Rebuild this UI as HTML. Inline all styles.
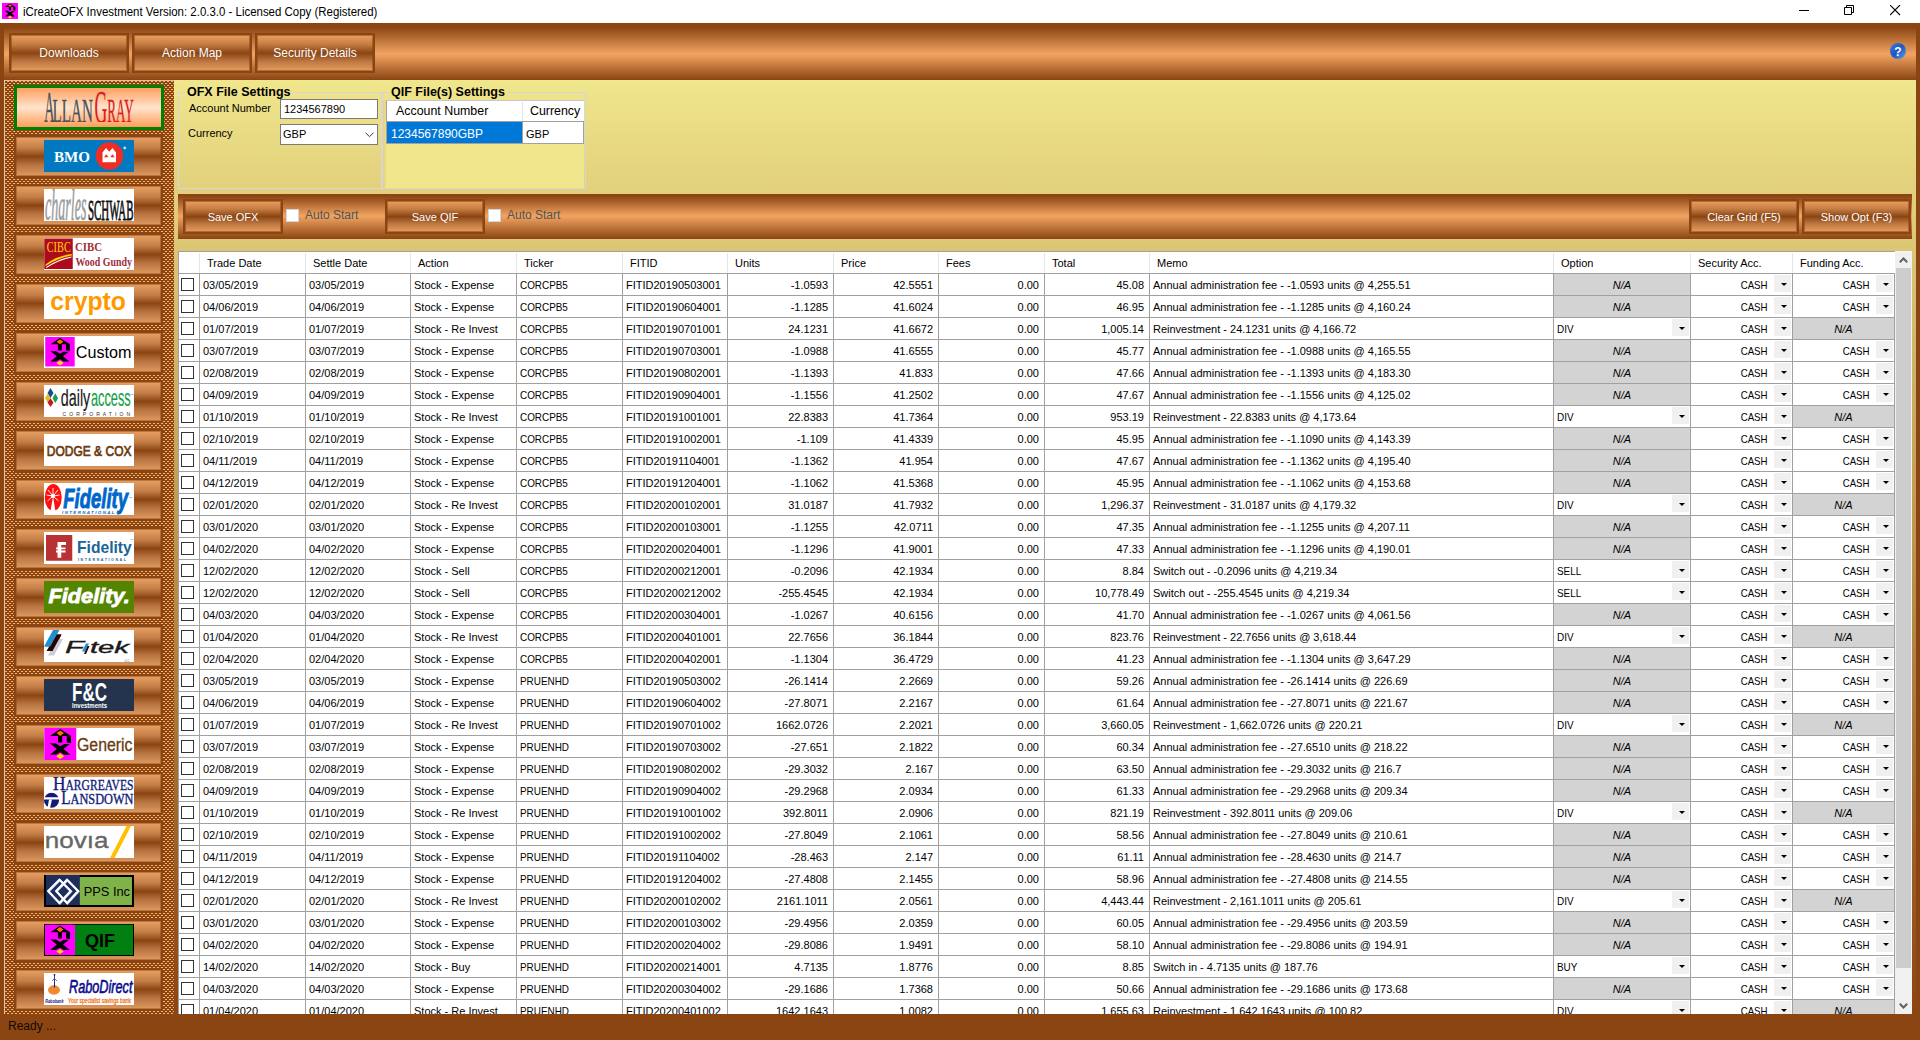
<!DOCTYPE html><html><head><meta charset="utf-8"><title>iCreateOFX</title><style>html,body{margin:0;padding:0;}
body{width:1920px;height:1040px;overflow:hidden;position:relative;background:#8B4513;font-family:"Liberation Sans",sans-serif;}
div,span,svg{box-sizing:border-box;}
#title{position:absolute;left:0;top:0;width:1920px;height:23px;background:#fff;}
.appicon{position:absolute;left:2px;top:3px;}
.ttext{position:absolute;left:23px;top:5px;font-size:12px;transform:scaleX(0.954);transform-origin:0 0;color:#000;white-space:nowrap;}
.wc{position:absolute;top:5px;}
#toolbar{position:absolute;left:4px;top:23px;width:1912px;height:57px;background:linear-gradient(#8B4513 0px,#8B4513 4px,#F2A462 31px,#8B4513 57px);}
.btn{position:absolute;border:2px solid #8B4513;box-shadow:inset 0 0 0 1px rgba(139,69,19,.55);background:linear-gradient(#EBA05E 0%,#C77E45 25%,#8B4513 50%,#C07A44 75%,#E69C5C 100%);color:#fff;font-size:12px;text-align:center;}
.btn span{position:absolute;left:0;right:0;top:50%;transform:translateY(-50%);white-space:nowrap;text-shadow:0 0 1px rgba(80,40,10,.3);}
#help{position:absolute;left:1889px;top:42px;}
#lpanel{position:absolute;left:4px;top:80px;}
.lbtn{position:absolute;left:14px;width:149px;height:43px;border:2px solid #8B4513;box-shadow:inset 0 0 0 1px rgba(139,69,19,.45);background:linear-gradient(#E8A062 0%,#C47E48 28%,#8B4513 50%,#B87442 72%,#DE9A5E 100%);}
.selbtn{position:absolute;border:3px solid #008000;background:linear-gradient(#FFA060 0%,#FFC8A0 30%,#FFE4CC 50%,#FFC8A0 70%,#FF9E5C 100%);}
.logo{position:absolute;left:44px;width:90px;height:32px;overflow:hidden;}
.logo svg{display:block;}
#main{position:absolute;left:174px;top:80px;width:1742px;height:934px;background:linear-gradient(#F0E68C 0px,#E2D07C 110px,#8B4513 934px);}
.gbox{position:absolute;border:1px solid #D6D6DA;}
.gline{position:absolute;height:1px;background:#D6D6DA;}
.gtitle{position:absolute;font-size:12.5px;font-weight:bold;color:#000;padding:0 3px;white-space:nowrap;background:transparent;}
.lbl{position:absolute;font-size:11px;color:#000;white-space:nowrap;}
.tbox{position:absolute;background:#fff;border:1px solid #7A7A7A;}
.tbox span{position:absolute;font-size:11px;color:#000;white-space:nowrap;}
#qif{position:absolute;left:386px;top:100px;width:198px;height:44px;border:1px solid #A0A0A0;background:#fff;}
#qif .qh{position:absolute;top:0;height:21px;background:#fff;}
#qif span{position:absolute;top:3px;font-size:12px;white-space:nowrap;}
#qif .qsel{position:absolute;left:0;top:21px;width:135px;height:21px;background:#0078D7;color:#fff;}
#qif .qsel span{left:3px;top:4px;}
#qif .qc{position:absolute;left:136px;top:21px;width:60px;height:21px;background:#fff;}
#qif .qc span{left:3px;top:4px;}
#stool{position:absolute;left:178px;top:194px;width:1734px;height:45px;background:linear-gradient(#8B4513 0px,#8B4513 2px,#F2A462 22px,#8B4513 45px);}
.sbtn{font-size:11px;}
.cbx{position:absolute;width:13px;height:13px;background:#fff;border:1px solid #CCD6E0;}
.astext{position:absolute;font-size:12px;color:#4E5656;white-space:nowrap;}
#grid{position:absolute;left:178px;top:251px;width:1734px;height:763px;background:#fff;border-top:1px solid #A0A0A0;border-left:1px solid #A0A0A0;overflow:hidden;
 background-image:repeating-linear-gradient(#A0A0A0 0px,#A0A0A0 1px,transparent 1px,transparent 22px);background-position:0 21px;background-size:1716px 100%;background-repeat:no-repeat;}
#grid>div{position:absolute;}
.hd{top:5px;font-size:11px;color:#000;white-space:nowrap;}
.hsep{top:1px;width:1px;height:20px;background:#E5E5E5;}
#vlines{left:0;top:0;width:1716px;height:763px;pointer-events:none;}
.vl{position:absolute;top:22px;width:1px;height:800px;background:#A0A0A0;}
.t{font-size:11px;color:#000;white-space:nowrap;line-height:21px;height:21px;padding-top:1px;}
.t.r{text-align:right;}
.cb{left:2px;width:13px;height:13px;border:1px solid #333;background:#fff;}
.na{height:21px;line-height:21px;padding-top:1px;background:#D3D3D3;font-size:11px;font-style:italic;text-align:center;color:#000;}
.dd{width:17px;height:17px;background:#F0F0F0;}
.dd:after{content:"";position:absolute;left:7px;top:8px;border-left:3px solid transparent;border-right:3px solid transparent;border-top:3px solid #000;}
#sb{left:1716px;top:0;width:17px;height:763px;background:#F0F0F0;}
#thumb{position:absolute;left:1px;top:16px;width:15px;height:700px;background:#CDCDCD;}
#status{position:absolute;left:0;top:1014px;width:1920px;height:26px;background:#8B4513;color:#140A02;font-size:12px;padding:5px 0 0 8px;}
.abs{position:absolute;}
.qt{position:absolute;white-space:nowrap;color:#000;}
.cash{display:inline-block;transform:scaleX(0.88);transform-origin:100% 50%;}
.tick{transform:scaleX(0.9);transform-origin:0 50%;}
</style></head><body>
<div id="title"><svg class="appicon" width="16" height="16" viewBox="0 0 32 32"><rect width="32" height="32" fill="#ff00ff"/><path d="M5.75 7.9L16 1L26.75 8V15.2L22.5 14.6V8H18V14.6H13.75V8Z" fill="#000"/><path d="M12.25 5.1L16 2.4L19.75 5.1L16 7.9Z" fill="#ff7000"/><path d="M5.5 15.25L11.75 15.5L16 18.25L20 16L25.5 16L19.25 21L26.25 26.75L20 26.75L16 24.25L12 26.5L5.75 26.75L12.5 21Z" fill="#000"/><path d="M12 28.25L16 25.6L20 28.25L16 31Z" fill="#ffd800"/></svg><span class="ttext">iCreateOFX Investment Version: 2.0.3.0 - Licensed Copy (Registered)</span>
<svg class="wc" style="left:1799px" width="11" height="11"><rect x="0" y="5" width="10" height="1" fill="#000"/></svg>
<svg class="wc" style="left:1844px" width="11" height="11"><path d="M0.5 2.5h7v7h-7z M2.5 2.5v-2h7v7h-2" fill="none" stroke="#000" stroke-width="1"/></svg>
<svg class="wc" style="left:1890px" width="11" height="11"><path d="M0 0L10 10M10 0L0 10" stroke="#000" stroke-width="1.1"/></svg>
</div>
<div id="toolbar"></div>
<div class="btn" style="left:9px;top:33px;width:120px;height:40px"><span>Downloads</span></div>
<div class="btn" style="left:132px;top:33px;width:120px;height:40px"><span>Action Map</span></div>
<div class="btn" style="left:255px;top:33px;width:120px;height:40px"><span>Security Details</span></div>
<svg id="help" width="18" height="18" viewBox="0 0 18 18"><defs><linearGradient id="hg" x1="0" y1="0" x2="1" y2="1"><stop offset="0" stop-color="#3b7be0"/><stop offset="0.5" stop-color="#1f55c0"/><stop offset="1" stop-color="#5aa8f0"/></linearGradient></defs><circle cx="9" cy="9" r="8" fill="url(#hg)"/><text x="9" y="13.5" text-anchor="middle" font-family="Liberation Sans" font-weight="bold" font-size="12" fill="#fff">?</text></svg>
<svg id="lpanel" width="170" height="934"><defs><pattern id="pt" width="4" height="4" patternUnits="userSpaceOnUse"><rect width="4" height="4" fill="#8B4513"/><rect x="3" y="1" width="1" height="1" fill="#FFB46C"/><rect x="0" y="1" width="1" height="1" fill="#FFB46C"/><rect x="1" y="3" width="2" height="1" fill="#FFB46C"/></pattern></defs><rect width="170" height="934" fill="url(#pt)"/><rect width="1" height="934" fill="#F0DCC8" opacity="0.8"/><rect width="170" height="1" fill="#F0DCC8" opacity="0.8"/></svg>
<div class="selbtn" style="left:14px;top:85px;width:150px;height:45px"></div>
<div class="lbtn" style="top:135px"></div>
<div class="lbtn" style="top:184px"></div>
<div class="lbtn" style="top:233px"></div>
<div class="lbtn" style="top:282px"></div>
<div class="lbtn" style="top:331px"></div>
<div class="lbtn" style="top:380px"></div>
<div class="lbtn" style="top:429px"></div>
<div class="lbtn" style="top:478px"></div>
<div class="lbtn" style="top:527px"></div>
<div class="lbtn" style="top:576px"></div>
<div class="lbtn" style="top:625px"></div>
<div class="lbtn" style="top:674px"></div>
<div class="lbtn" style="top:723px"></div>
<div class="lbtn" style="top:772px"></div>
<div class="lbtn" style="top:821px"></div>
<div class="lbtn" style="top:870px"></div>
<div class="lbtn" style="top:919px"></div>
<div class="lbtn" style="top:968px"></div>
<div class="logo" style="top:90px"><svg width="90" height="32" viewBox="0 0 90 32"><text x="0.2" y="31.9" font-family="Liberation Serif" font-size="45" font-weight="normal" font-style="normal" fill="#4c525a" textLength="10.2" lengthAdjust="spacingAndGlyphs" stroke="#4c525a" stroke-width="0.35">A</text><text x="8.5" y="31.9" font-family="Liberation Serif" font-size="33.5" font-weight="normal" font-style="normal" fill="#4c525a" textLength="40.5" lengthAdjust="spacingAndGlyphs" stroke="#4c525a" stroke-width="0.35">LLAN</text><text x="50.5" y="32.5" font-family="Liberation Serif" font-size="46" font-weight="normal" font-style="normal" fill="#d81e24" textLength="12.7" lengthAdjust="spacingAndGlyphs" stroke="#d81e24" stroke-width="0.35">G</text><text x="63.2" y="31.9" font-family="Liberation Serif" font-size="33.5" font-weight="normal" font-style="normal" fill="#d81e24" textLength="26.5" lengthAdjust="spacingAndGlyphs" stroke="#d81e24" stroke-width="0.35">RAY</text></svg></div>
<div class="logo" style="top:140px"><svg width="90" height="32" viewBox="0 0 90 32"><rect width="90" height="32" fill="#0079c1"/><text x="10" y="22.25" font-family="Liberation Serif" font-size="15" font-weight="bold" font-style="normal" fill="#fff" textLength="36" lengthAdjust="spacingAndGlyphs" >BMO</text><circle cx="65.4" cy="16" r="13.7" fill="#ee2e24"/><path d="M58.5 22.25V12.5L62 8L65.25 11.75L68.5 8L72 12.5V22.25Z" fill="#fff"/><path d="M60 17.25L62.25 14.25L64.5 17.25ZM66.25 17.25L68.5 14.25L70.75 17.25Z" fill="#ee2e24"/><circle cx="80.75" cy="8" r="1.4" fill="#c8dcf0"/></svg></div>
<div class="logo" style="top:189px"><svg width="90" height="32" viewBox="0 0 90 32"><rect width="90" height="32" fill="#fff"/><text x="1" y="30.75" font-family="Liberation Serif" font-size="44" font-weight="normal" font-style="italic" fill="#9a9a9a" textLength="41.5" lengthAdjust="spacingAndGlyphs" stroke="#9a9a9a" stroke-width="0.6">charles</text><text x="44" y="30.75" font-family="Liberation Serif" font-size="29.5" font-weight="normal" font-style="normal" fill="#111" textLength="45.5" lengthAdjust="spacingAndGlyphs" stroke="#111" stroke-width="0.9">SCHWAB</text></svg></div>
<div class="logo" style="top:238px"><svg width="90" height="32" viewBox="0 0 90 32"><rect width="90" height="32" fill="#fff"/><rect x="0.25" y="0.5" width="28.5" height="30.5" fill="#ae0a1e"/><text x="2.75" y="14.25" font-family="Liberation Serif" font-size="15.5" font-weight="normal" font-style="normal" fill="#ffd700" textLength="24" lengthAdjust="spacingAndGlyphs" >CIBC</text><path d="M1.5 26.5 Q12 18 27.75 16 L27.75 17.5 Q14 20 1.5 28Z" fill="#ffd700"/><path d="M2 29 Q14 21 27.5 18.5 L27.5 19.5 Q14 22.5 2.5 30Z" fill="#fff"/><text x="31" y="13" font-family="Liberation Serif" font-size="13.5" font-weight="bold" font-style="normal" fill="#a0303c" textLength="27" lengthAdjust="spacingAndGlyphs" >CIBC</text><text x="31.5" y="27.5" font-family="Liberation Serif" font-size="12.5" font-weight="bold" font-style="normal" fill="#a0303c" textLength="56.5" lengthAdjust="spacingAndGlyphs" >Wood Gundy</text></svg></div>
<div class="logo" style="top:287px"><svg width="90" height="32" viewBox="0 0 90 32"><rect width="90" height="32" fill="#fff"/><text x="6.25" y="23" font-family="Liberation Sans" font-size="26" font-weight="bold" font-style="normal" fill="#ff9900" textLength="75.75" lengthAdjust="spacingAndGlyphs" >crypto</text></svg></div>
<div class="logo" style="top:336px"><svg width="90" height="32" viewBox="0 0 90 32"><rect width="90" height="32" fill="#fff"/><g transform="translate(1.25,1) scale(0.92)"><rect width="32" height="32" fill="#ff00ff"/><path d="M5.75 7.9L16 1L26.75 8V15.2L22.5 14.6V8H18V14.6H13.75V8Z" fill="#000"/><path d="M12.25 5.1L16 2.4L19.75 5.1L16 7.9Z" fill="#ff7000"/><path d="M5.5 15.25L11.75 15.5L16 18.25L20 16L25.5 16L19.25 21L26.25 26.75L20 26.75L16 24.25L12 26.5L5.75 26.75L12.5 21Z" fill="#000"/><path d="M12 28.25L16 25.6L20 28.25L16 31Z" fill="#ffd800"/></g><text x="31.75" y="22" font-family="Liberation Sans" font-size="16.75" font-weight="normal" font-style="normal" fill="#000" textLength="55.75" lengthAdjust="spacingAndGlyphs" >Custom</text></svg></div>
<div class="logo" style="top:385px"><svg width="90" height="32" viewBox="0 0 90 32"><rect width="90" height="32" fill="#fff"/><path d="M3.5 8.0L6.5 3.0L9.5 8.0L6.5 13.0Z" fill="#1b4a8a"/><path d="M0.9000000000000004 13.2L3.7 8.799999999999999L6.5 13.2L3.7 17.6Z" fill="#e3bb22"/><path d="M8.5 13.2L11.3 8.299999999999999L14.100000000000001 13.2L11.3 18.1Z" fill="#19a052"/><path d="M3.5 17.6L6.5 13.200000000000001L9.5 17.6L6.5 22.0Z" fill="#c01a24"/><text x="16.75" y="20.75" font-family="Liberation Sans" font-size="24" font-weight="normal" font-style="normal" fill="#1a1a1a" textLength="29.5" lengthAdjust="spacingAndGlyphs" stroke="#1a1a1a" stroke-width="0.2">daily</text><text x="47" y="20.75" font-family="Liberation Sans" font-size="24" font-weight="normal" font-style="normal" fill="#16a04a" textLength="39.75" lengthAdjust="spacingAndGlyphs" stroke="#16a04a" stroke-width="0.2">access</text><text x="18.5" y="31.25" font-family="Liberation Sans" font-size="5" font-weight="normal" font-style="normal" fill="#333" textLength="67.5" lengthAdjust="spacing" >CORPORATION</text><text x="86.5" y="10" font-family="Liberation Sans" font-size="2.2" font-weight="normal" font-style="normal" fill="#555" >TM</text></svg></div>
<div class="logo" style="top:434px"><svg width="90" height="32" viewBox="0 0 90 32"><rect width="90" height="32" fill="#fff"/><text x="2.75" y="21.75" font-family="Liberation Sans" font-size="14.7" font-weight="normal" font-style="normal" fill="#6b3a10" textLength="84.75" lengthAdjust="spacingAndGlyphs" stroke="#6b3a10" stroke-width="0.7">DODGE &amp; COX</text></svg></div>
<div class="logo" style="top:483px"><svg width="90" height="32" viewBox="0 0 90 32"><rect width="90" height="32" fill="#fff"/><ellipse cx="9.25" cy="14.5" rx="8.5" ry="13.5" fill="#ff1010"/><path d="M6.5 28.5L9 13L11.5 28.5Z" fill="#fff"/><g stroke="#fff" stroke-width="0.9"><path d="M9 13L9 5M9 13L4 7M9 13L14 7M9 13L2.5 12M9 13L15.5 12M9 13L3.5 18M9 13L14.5 18"/></g><circle cx="9" cy="13" r="2" fill="#fff"/><text x="19.25" y="25.25" font-family="Liberation Sans" font-size="28" font-weight="bold" font-style="italic" fill="#0066cc" textLength="64.75" lengthAdjust="spacingAndGlyphs" stroke="#0066cc" stroke-width="1">Fidelity</text><text x="18" y="30.75" font-family="Liberation Sans" font-size="4.4" font-weight="bold" font-style="italic" fill="#0066cc" textLength="52.5" lengthAdjust="spacing" >INTERNATIONAL</text><text x="85" y="15" font-family="Liberation Sans" font-size="2.5" font-weight="normal" font-style="normal" fill="#0066cc" >TM</text></svg></div>
<div class="logo" style="top:532px"><svg width="90" height="32" viewBox="0 0 90 32"><rect width="90" height="32" fill="#fff"/><rect x="2" y="3" width="26.25" height="25.75" fill="#b83234"/><path d="M13.5 10H22V13H17.25V15.5H21.5V17.25H17.25V18.5H21.5V20.5H17.25V25.75H13.5V20.5H12V18.5H13.5V17.25H12V15.5H13.5Z" fill="#fff"/><text x="33" y="21" font-family="Liberation Sans" font-size="17" font-weight="bold" font-style="normal" fill="#1a6496" textLength="54.75" lengthAdjust="spacingAndGlyphs" >Fidelity</text><text x="34" y="28.75" font-family="Liberation Sans" font-size="3.6" font-weight="bold" font-style="normal" fill="#1a6496" textLength="48" lengthAdjust="spacing" >INTERNATIONAL</text><text x="86.5" y="8" font-family="Liberation Sans" font-size="2" font-weight="normal" font-style="normal" fill="#1a6496" >TM</text></svg></div>
<div class="logo" style="top:581px"><svg width="90" height="32" viewBox="0 0 90 32"><rect width="90" height="32" fill="#548500"/><text x="4.5" y="21.75" font-family="Liberation Sans" font-size="20" font-weight="bold" font-style="italic" fill="#fff" textLength="81.25" lengthAdjust="spacingAndGlyphs" stroke="#fff" stroke-width="0.8">Fidelity.</text></svg></div>
<div class="logo" style="top:630px"><svg width="90" height="32" viewBox="0 0 90 32"><rect width="90" height="32" fill="#fff"/><path d="M9.25 0H15.25L6.25 16.5H0.25Z" fill="#1e90d0"/><path d="M12.25 4.5H17.5L8.5 21H2.75Z" fill="#2a0000"/><path d="M13 9H19L10 25.5H4Z" fill="#c8c8d0" opacity="0.9"/><path d="M12.25 4.5H17.5L8.5 21H2.75Z" fill="#2a0000"/><path d="M9.25 0H15.25L6.25 16.5H0.25Z" fill="#1e90d0"/><text x="21" y="23" font-family="Liberation Sans" font-size="17" font-weight="normal" font-style="italic" fill="#1a1a1a" textLength="19" lengthAdjust="spacingAndGlyphs" stroke="#1a1a1a" stroke-width="0.3">F</text><path d="M42 13.5H45L41 21.5H38Z" fill="#1e90d0"/><path d="M43.5 16H45.5L42 24H40Z" fill="#2a0000"/><text x="46" y="23" font-family="Liberation Sans" font-size="17" font-weight="normal" font-style="italic" fill="#1a1a1a" textLength="39" lengthAdjust="spacingAndGlyphs" stroke="#1a1a1a" stroke-width="0.4">tek</text><text x="80.5" y="31.5" font-family="Liberation Sans" font-size="2.6" font-weight="normal" font-style="normal" fill="#555" >LLC</text></svg></div>
<div class="logo" style="top:679px"><svg width="90" height="32" viewBox="0 0 90 32"><rect width="90" height="32" fill="#24344e"/><text x="28" y="22" font-family="Liberation Sans" font-size="26.5" font-weight="bold" font-style="normal" fill="#fff" textLength="35" lengthAdjust="spacingAndGlyphs" >F&amp;C</text><text x="28" y="29" font-family="Liberation Sans" font-size="7" font-weight="bold" font-style="normal" fill="#fff" textLength="35" lengthAdjust="spacingAndGlyphs" >Investments</text></svg></div>
<div class="logo" style="top:728px"><svg width="90" height="32" viewBox="0 0 90 32"><rect width="90" height="32" fill="#fff"/><g transform="translate(0.25,0)"><rect width="32" height="32" fill="#ff00ff"/><path d="M5.75 7.9L16 1L26.75 8V15.2L22.5 14.6V8H18V14.6H13.75V8Z" fill="#000"/><path d="M12.25 5.1L16 2.4L19.75 5.1L16 7.9Z" fill="#ff7000"/><path d="M5.5 15.25L11.75 15.5L16 18.25L20 16L25.5 16L19.25 21L26.25 26.75L20 26.75L16 24.25L12 26.5L5.75 26.75L12.5 21Z" fill="#000"/><path d="M12 28.25L16 25.6L20 28.25L16 31Z" fill="#ffd800"/></g><text x="33" y="22.5" font-family="Liberation Sans" font-size="18.8" font-weight="normal" font-style="normal" fill="#6b3a10" textLength="55.5" lengthAdjust="spacingAndGlyphs" stroke="#6b3a10" stroke-width="0.3">Generic</text></svg></div>
<div class="logo" style="top:777px"><svg width="90" height="32" viewBox="0 0 90 32"><rect width="90" height="32" fill="#fff"/><circle cx="7.5" cy="23.25" r="7.5" fill="#101c78"/><rect x="0" y="20.25" width="15" height="2.25" fill="#fff"/><path d="M5 22.5H8L6 31H3.5Z" fill="#fff"/><text x="9" y="12.75" font-family="Liberation Serif" font-size="19" font-weight="normal" font-style="normal" fill="#101c78" textLength="12.5" lengthAdjust="spacingAndGlyphs" stroke="#101c78" stroke-width="0.35">H</text><text x="21.5" y="12.75" font-family="Liberation Serif" font-size="14.75" font-weight="normal" font-style="normal" fill="#101c78" textLength="68" lengthAdjust="spacingAndGlyphs" stroke="#101c78" stroke-width="0.35">ARGREAVES</text><text x="17.25" y="26.75" font-family="Liberation Serif" font-size="19" font-weight="normal" font-style="normal" fill="#101c78" textLength="9.25" lengthAdjust="spacingAndGlyphs" stroke="#101c78" stroke-width="0.35">L</text><text x="26.5" y="26.75" font-family="Liberation Serif" font-size="13.6" font-weight="normal" font-style="normal" fill="#101c78" textLength="63" lengthAdjust="spacingAndGlyphs" stroke="#101c78" stroke-width="0.35">ANSDOWN</text></svg></div>
<div class="logo" style="top:826px"><svg width="90" height="32" viewBox="0 0 90 32"><rect width="90" height="32" fill="#fff"/><text x="0.75" y="21.5" font-family="Liberation Sans" font-size="22.5" font-weight="normal" font-style="normal" fill="#666" textLength="63.75" lengthAdjust="spacingAndGlyphs" stroke="#666" stroke-width="0.35">nov&#305;a</text><path d="M66 32H70.5L87 0H82.5Z" fill="#ffc000"/></svg></div>
<div class="logo" style="top:875px"><svg width="90" height="32" viewBox="0 0 90 32"><rect width="90" height="32" fill="#000"/><rect x="2" y="0" width="33.75" height="30" fill="#1e2e5c"/><rect x="35.75" y="2" width="52.25" height="28" fill="#80b24a"/><g fill="none" stroke="#b8c8e8" stroke-width="2"><path d="M4.6 16.6L15.9 5.2L27.2 16.6L15.9 28.6Z"/><path d="M12.6 16.6L23.5 5.2L34.6 16.6L23.5 28.6Z"/></g><g fill="none" stroke="#fff" stroke-width="2"><path d="M4.1 16L15.4 4.6L26.7 16L15.4 28Z"/><path d="M12.1 16L23 4.6L34.1 16L23 28Z"/></g><text x="39.75" y="20.75" font-family="Liberation Sans" font-size="13.3" font-weight="normal" font-style="normal" fill="#000" textLength="46.25" lengthAdjust="spacingAndGlyphs" >PPS Inc</text></svg></div>
<div class="logo" style="top:924px"><svg width="90" height="32" viewBox="0 0 90 32"><rect width="90" height="32" fill="#000"/><g transform="translate(1,0.75) scale(0.9375,0.945)"><rect width="32" height="32" fill="#ff00ff"/><path d="M5.75 7.9L16 1L26.75 8V15.2L22.5 14.6V8H18V14.6H13.75V8Z" fill="#000"/><path d="M12.25 5.1L16 2.4L19.75 5.1L16 7.9Z" fill="#ff7000"/><path d="M5.5 15.25L11.75 15.5L16 18.25L20 16L25.5 16L19.25 21L26.25 26.75L20 26.75L16 24.25L12 26.5L5.75 26.75L12.5 21Z" fill="#000"/><path d="M12 28.25L16 25.6L20 28.25L16 31Z" fill="#ffd800"/></g><rect x="31" y="0.75" width="58" height="30.25" fill="#008010"/><text x="41" y="22.75" font-family="Liberation Sans" font-size="19.2" font-weight="bold" font-style="normal" fill="#000" textLength="30" lengthAdjust="spacingAndGlyphs" >QIF</text></svg></div>
<div class="logo" style="top:973px"><svg width="90" height="32" viewBox="0 0 90 32"><rect width="90" height="32" fill="#fff"/><ellipse cx="10" cy="17" rx="6" ry="4.75" fill="#f08a30"/><path d="M10.25 1L11 1.5L11 14.5L10 14.5Z" fill="#101880"/><circle cx="10.5" cy="1.8" r="0.9" fill="#101880"/><path d="M8 8L10.5 5.5L13 8" fill="none" stroke="#101880" stroke-width="0.6"/><text x="25" y="19.5" font-family="Liberation Sans" font-size="17.8" font-weight="normal" font-style="italic" fill="#0a0a8c" textLength="63.5" lengthAdjust="spacingAndGlyphs" stroke="#0a0a8c" stroke-width="0.6">RaboDirect</text><text x="1.25" y="29.75" font-family="Liberation Sans" font-size="5.5" font-weight="bold" font-style="italic" fill="#101880" textLength="18.25" lengthAdjust="spacingAndGlyphs" >Rabobank</text><text x="24" y="30" font-family="Liberation Sans" font-size="6.4" font-weight="normal" font-style="normal" fill="#f07020" textLength="63" lengthAdjust="spacingAndGlyphs" stroke="#f07020" stroke-width="0.25">Your specialist savings bank</text></svg></div>
<div id="main"></div>
<div class="gbox" style="left:178px;top:92px;width:204px;height:97px;border-top:none"></div><div class="gline" style="left:178px;top:92px;width:8px"></div><div class="gline" style="left:290px;top:92px;width:92px"></div>
<div class="gtitle" style="left:184px;top:85px">OFX File Settings</div>
<div class="gbox" style="left:382px;top:92px;width:204px;height:97px;border-top:none"></div><div class="gline" style="left:382px;top:92px;width:8px"></div><div class="gline" style="left:508px;top:92px;width:78px"></div>
<div class="gtitle" style="left:388px;top:85px">QIF File(s) Settings</div>
<div class="lbl" style="left:189px;top:102px">Account Number</div>
<div class="lbl" style="left:188px;top:127px">Currency</div>
<div class="tbox" style="left:280px;top:99px;width:98px;height:20px"><span style="left:3px;top:3px">1234567890</span></div>
<div class="tbox" style="left:280px;top:124px;width:98px;height:21px"><span style="left:2px;top:3px">GBP</span><svg style="position:absolute;left:84px;top:7px" width="10" height="6"><path d="M0.5 0.8L4.5 4.6L8.5 0.8" fill="none" stroke="#333" stroke-width="1"/></svg></div>
<div class="abs" style="left:383px;top:100px;width:3px;height:88px;background:linear-gradient(90deg,#E4D27E,#EBDD86)"></div>
<div class="abs" style="left:386px;top:100px;width:198px;height:88px;background:#F0E68C"></div>
<div class="abs" style="left:386px;top:100px;width:198px;height:22px;background:#fff;border-left:1px solid #A0A0A0;border-top:1px solid #C8C8C8"></div>
<div class="abs" style="left:522px;top:102px;width:1px;height:19px;background:#E3E3E3"></div>
<div class="abs" style="left:386px;top:121px;width:198px;height:1px;background:#A0A0A0"></div>
<div class="abs" style="left:386px;top:122px;width:1px;height:21px;background:#A0A0A0"></div>
<div class="abs" style="left:387px;top:122px;width:135px;height:21px;background:#0078D7"></div>
<div class="abs" style="left:522px;top:122px;width:1px;height:21px;background:#A0A0A0"></div>
<div class="abs" style="left:523px;top:122px;width:60px;height:21px;background:#fff"></div>
<div class="abs" style="left:583px;top:122px;width:1px;height:21px;background:#A0A0A0"></div>
<div class="abs" style="left:386px;top:143px;width:198px;height:1px;background:#A0A0A0"></div>
<div class="qt" style="left:396px;top:104px;font-size:12.4px">Account Number</div>
<div class="qt" style="left:530px;top:104px;font-size:12.4px">Currency</div>
<div class="qt" style="left:391px;top:127px;font-size:12px;color:#fff">1234567890GBP</div>
<div class="qt" style="left:526px;top:128px;font-size:11px">GBP</div>
<div id="stool"></div>
<div class="btn sbtn" style="left:183px;top:199px;width:100px;height:35px"><span>Save OFX</span></div>
<div class="btn sbtn" style="left:385px;top:199px;width:100px;height:35px"><span>Save QIF</span></div>
<div class="btn sbtn" style="left:1689px;top:199px;width:110px;height:35px"><span>Clear Grid (F5)</span></div>
<div class="btn sbtn" style="left:1802px;top:199px;width:109px;height:35px"><span>Show Opt (F3)</span></div>
<div class="cbx" style="left:286px;top:209px"></div><div class="astext" style="left:305px;top:208px">Auto Start</div>
<div class="cbx" style="left:488px;top:209px"></div><div class="astext" style="left:507px;top:208px">Auto Start</div>
<div id="grid">
<div class="hd" style="left:28px">Trade Date</div><div class="hd" style="left:134px">Settle Date</div><div class="hd" style="left:239px">Action</div><div class="hd" style="left:345px">Ticker</div><div class="hd" style="left:451px">FITID</div><div class="hd" style="left:556px">Units</div><div class="hd" style="left:662px">Price</div><div class="hd" style="left:767px">Fees</div><div class="hd" style="left:873px">Total</div><div class="hd" style="left:978px">Memo</div><div class="hd" style="left:1382px">Option</div><div class="hd" style="left:1519px">Security Acc.</div><div class="hd" style="left:1621px">Funding Acc.</div><div class="hsep" style="left:20px"></div><div class="hsep" style="left:126px"></div><div class="hsep" style="left:231px"></div><div class="hsep" style="left:337px"></div><div class="hsep" style="left:443px"></div><div class="hsep" style="left:548px"></div><div class="hsep" style="left:654px"></div><div class="hsep" style="left:759px"></div><div class="hsep" style="left:865px"></div><div class="hsep" style="left:970px"></div><div class="hsep" style="left:1374px"></div><div class="hsep" style="left:1511px"></div><div class="hsep" style="left:1613px"></div><div class="cb" style="top:26px"></div><div class="t" style="left:24px;top:22px">03/05/2019</div><div class="t" style="left:130px;top:22px">03/05/2019</div><div class="t" style="left:235px;top:22px">Stock - Expense</div><div class="t tick" style="left:341px;top:22px">CORCPB5</div><div class="t" style="left:447px;top:22px">FITID20190503001</div><div class="t r" style="left:549px;width:100px;top:22px">-1.0593</div><div class="t r" style="left:655px;width:99px;top:22px">42.5551</div><div class="t r" style="left:760px;width:100px;top:22px">0.00</div><div class="t r" style="left:866px;width:99px;top:22px">45.08</div><div class="t" style="left:974px;top:22px">Annual administration fee - -1.0593 units @ 4,255.51</div><div class="na" style="left:1375px;width:136px;top:22px">N/A</div><div class="t r" style="left:1512px;width:77px;top:22px"><span class="cash">CASH</span></div><div class="dd" style="left:1595px;top:23px"></div><div class="t r" style="left:1614px;width:77px;top:22px"><span class="cash">CASH</span></div><div class="dd" style="left:1697px;top:23px"></div><div class="cb" style="top:48px"></div><div class="t" style="left:24px;top:44px">04/06/2019</div><div class="t" style="left:130px;top:44px">04/06/2019</div><div class="t" style="left:235px;top:44px">Stock - Expense</div><div class="t tick" style="left:341px;top:44px">CORCPB5</div><div class="t" style="left:447px;top:44px">FITID20190604001</div><div class="t r" style="left:549px;width:100px;top:44px">-1.1285</div><div class="t r" style="left:655px;width:99px;top:44px">41.6024</div><div class="t r" style="left:760px;width:100px;top:44px">0.00</div><div class="t r" style="left:866px;width:99px;top:44px">46.95</div><div class="t" style="left:974px;top:44px">Annual administration fee - -1.1285 units @ 4,160.24</div><div class="na" style="left:1375px;width:136px;top:44px">N/A</div><div class="t r" style="left:1512px;width:77px;top:44px"><span class="cash">CASH</span></div><div class="dd" style="left:1595px;top:45px"></div><div class="t r" style="left:1614px;width:77px;top:44px"><span class="cash">CASH</span></div><div class="dd" style="left:1697px;top:45px"></div><div class="cb" style="top:70px"></div><div class="t" style="left:24px;top:66px">01/07/2019</div><div class="t" style="left:130px;top:66px">01/07/2019</div><div class="t" style="left:235px;top:66px">Stock - Re Invest</div><div class="t tick" style="left:341px;top:66px">CORCPB5</div><div class="t" style="left:447px;top:66px">FITID20190701001</div><div class="t r" style="left:549px;width:100px;top:66px">24.1231</div><div class="t r" style="left:655px;width:99px;top:66px">41.6672</div><div class="t r" style="left:760px;width:100px;top:66px">0.00</div><div class="t r" style="left:866px;width:99px;top:66px">1,005.14</div><div class="t" style="left:974px;top:66px">Reinvestment - 24.1231 units @ 4,166.72</div><div class="t tick" style="left:1378px;top:66px">DIV</div><div class="dd" style="left:1493px;top:67px"></div><div class="t r" style="left:1512px;width:77px;top:66px"><span class="cash">CASH</span></div><div class="dd" style="left:1595px;top:67px"></div><div class="na" style="left:1614px;width:101px;top:66px">N/A</div><div class="cb" style="top:92px"></div><div class="t" style="left:24px;top:88px">03/07/2019</div><div class="t" style="left:130px;top:88px">03/07/2019</div><div class="t" style="left:235px;top:88px">Stock - Expense</div><div class="t tick" style="left:341px;top:88px">CORCPB5</div><div class="t" style="left:447px;top:88px">FITID20190703001</div><div class="t r" style="left:549px;width:100px;top:88px">-1.0988</div><div class="t r" style="left:655px;width:99px;top:88px">41.6555</div><div class="t r" style="left:760px;width:100px;top:88px">0.00</div><div class="t r" style="left:866px;width:99px;top:88px">45.77</div><div class="t" style="left:974px;top:88px">Annual administration fee - -1.0988 units @ 4,165.55</div><div class="na" style="left:1375px;width:136px;top:88px">N/A</div><div class="t r" style="left:1512px;width:77px;top:88px"><span class="cash">CASH</span></div><div class="dd" style="left:1595px;top:89px"></div><div class="t r" style="left:1614px;width:77px;top:88px"><span class="cash">CASH</span></div><div class="dd" style="left:1697px;top:89px"></div><div class="cb" style="top:114px"></div><div class="t" style="left:24px;top:110px">02/08/2019</div><div class="t" style="left:130px;top:110px">02/08/2019</div><div class="t" style="left:235px;top:110px">Stock - Expense</div><div class="t tick" style="left:341px;top:110px">CORCPB5</div><div class="t" style="left:447px;top:110px">FITID20190802001</div><div class="t r" style="left:549px;width:100px;top:110px">-1.1393</div><div class="t r" style="left:655px;width:99px;top:110px">41.833</div><div class="t r" style="left:760px;width:100px;top:110px">0.00</div><div class="t r" style="left:866px;width:99px;top:110px">47.66</div><div class="t" style="left:974px;top:110px">Annual administration fee - -1.1393 units @ 4,183.30</div><div class="na" style="left:1375px;width:136px;top:110px">N/A</div><div class="t r" style="left:1512px;width:77px;top:110px"><span class="cash">CASH</span></div><div class="dd" style="left:1595px;top:111px"></div><div class="t r" style="left:1614px;width:77px;top:110px"><span class="cash">CASH</span></div><div class="dd" style="left:1697px;top:111px"></div><div class="cb" style="top:136px"></div><div class="t" style="left:24px;top:132px">04/09/2019</div><div class="t" style="left:130px;top:132px">04/09/2019</div><div class="t" style="left:235px;top:132px">Stock - Expense</div><div class="t tick" style="left:341px;top:132px">CORCPB5</div><div class="t" style="left:447px;top:132px">FITID20190904001</div><div class="t r" style="left:549px;width:100px;top:132px">-1.1556</div><div class="t r" style="left:655px;width:99px;top:132px">41.2502</div><div class="t r" style="left:760px;width:100px;top:132px">0.00</div><div class="t r" style="left:866px;width:99px;top:132px">47.67</div><div class="t" style="left:974px;top:132px">Annual administration fee - -1.1556 units @ 4,125.02</div><div class="na" style="left:1375px;width:136px;top:132px">N/A</div><div class="t r" style="left:1512px;width:77px;top:132px"><span class="cash">CASH</span></div><div class="dd" style="left:1595px;top:133px"></div><div class="t r" style="left:1614px;width:77px;top:132px"><span class="cash">CASH</span></div><div class="dd" style="left:1697px;top:133px"></div><div class="cb" style="top:158px"></div><div class="t" style="left:24px;top:154px">01/10/2019</div><div class="t" style="left:130px;top:154px">01/10/2019</div><div class="t" style="left:235px;top:154px">Stock - Re Invest</div><div class="t tick" style="left:341px;top:154px">CORCPB5</div><div class="t" style="left:447px;top:154px">FITID20191001001</div><div class="t r" style="left:549px;width:100px;top:154px">22.8383</div><div class="t r" style="left:655px;width:99px;top:154px">41.7364</div><div class="t r" style="left:760px;width:100px;top:154px">0.00</div><div class="t r" style="left:866px;width:99px;top:154px">953.19</div><div class="t" style="left:974px;top:154px">Reinvestment - 22.8383 units @ 4,173.64</div><div class="t tick" style="left:1378px;top:154px">DIV</div><div class="dd" style="left:1493px;top:155px"></div><div class="t r" style="left:1512px;width:77px;top:154px"><span class="cash">CASH</span></div><div class="dd" style="left:1595px;top:155px"></div><div class="na" style="left:1614px;width:101px;top:154px">N/A</div><div class="cb" style="top:180px"></div><div class="t" style="left:24px;top:176px">02/10/2019</div><div class="t" style="left:130px;top:176px">02/10/2019</div><div class="t" style="left:235px;top:176px">Stock - Expense</div><div class="t tick" style="left:341px;top:176px">CORCPB5</div><div class="t" style="left:447px;top:176px">FITID20191002001</div><div class="t r" style="left:549px;width:100px;top:176px">-1.109</div><div class="t r" style="left:655px;width:99px;top:176px">41.4339</div><div class="t r" style="left:760px;width:100px;top:176px">0.00</div><div class="t r" style="left:866px;width:99px;top:176px">45.95</div><div class="t" style="left:974px;top:176px">Annual administration fee - -1.1090 units @ 4,143.39</div><div class="na" style="left:1375px;width:136px;top:176px">N/A</div><div class="t r" style="left:1512px;width:77px;top:176px"><span class="cash">CASH</span></div><div class="dd" style="left:1595px;top:177px"></div><div class="t r" style="left:1614px;width:77px;top:176px"><span class="cash">CASH</span></div><div class="dd" style="left:1697px;top:177px"></div><div class="cb" style="top:202px"></div><div class="t" style="left:24px;top:198px">04/11/2019</div><div class="t" style="left:130px;top:198px">04/11/2019</div><div class="t" style="left:235px;top:198px">Stock - Expense</div><div class="t tick" style="left:341px;top:198px">CORCPB5</div><div class="t" style="left:447px;top:198px">FITID20191104001</div><div class="t r" style="left:549px;width:100px;top:198px">-1.1362</div><div class="t r" style="left:655px;width:99px;top:198px">41.954</div><div class="t r" style="left:760px;width:100px;top:198px">0.00</div><div class="t r" style="left:866px;width:99px;top:198px">47.67</div><div class="t" style="left:974px;top:198px">Annual administration fee - -1.1362 units @ 4,195.40</div><div class="na" style="left:1375px;width:136px;top:198px">N/A</div><div class="t r" style="left:1512px;width:77px;top:198px"><span class="cash">CASH</span></div><div class="dd" style="left:1595px;top:199px"></div><div class="t r" style="left:1614px;width:77px;top:198px"><span class="cash">CASH</span></div><div class="dd" style="left:1697px;top:199px"></div><div class="cb" style="top:224px"></div><div class="t" style="left:24px;top:220px">04/12/2019</div><div class="t" style="left:130px;top:220px">04/12/2019</div><div class="t" style="left:235px;top:220px">Stock - Expense</div><div class="t tick" style="left:341px;top:220px">CORCPB5</div><div class="t" style="left:447px;top:220px">FITID20191204001</div><div class="t r" style="left:549px;width:100px;top:220px">-1.1062</div><div class="t r" style="left:655px;width:99px;top:220px">41.5368</div><div class="t r" style="left:760px;width:100px;top:220px">0.00</div><div class="t r" style="left:866px;width:99px;top:220px">45.95</div><div class="t" style="left:974px;top:220px">Annual administration fee - -1.1062 units @ 4,153.68</div><div class="na" style="left:1375px;width:136px;top:220px">N/A</div><div class="t r" style="left:1512px;width:77px;top:220px"><span class="cash">CASH</span></div><div class="dd" style="left:1595px;top:221px"></div><div class="t r" style="left:1614px;width:77px;top:220px"><span class="cash">CASH</span></div><div class="dd" style="left:1697px;top:221px"></div><div class="cb" style="top:246px"></div><div class="t" style="left:24px;top:242px">02/01/2020</div><div class="t" style="left:130px;top:242px">02/01/2020</div><div class="t" style="left:235px;top:242px">Stock - Re Invest</div><div class="t tick" style="left:341px;top:242px">CORCPB5</div><div class="t" style="left:447px;top:242px">FITID20200102001</div><div class="t r" style="left:549px;width:100px;top:242px">31.0187</div><div class="t r" style="left:655px;width:99px;top:242px">41.7932</div><div class="t r" style="left:760px;width:100px;top:242px">0.00</div><div class="t r" style="left:866px;width:99px;top:242px">1,296.37</div><div class="t" style="left:974px;top:242px">Reinvestment - 31.0187 units @ 4,179.32</div><div class="t tick" style="left:1378px;top:242px">DIV</div><div class="dd" style="left:1493px;top:243px"></div><div class="t r" style="left:1512px;width:77px;top:242px"><span class="cash">CASH</span></div><div class="dd" style="left:1595px;top:243px"></div><div class="na" style="left:1614px;width:101px;top:242px">N/A</div><div class="cb" style="top:268px"></div><div class="t" style="left:24px;top:264px">03/01/2020</div><div class="t" style="left:130px;top:264px">03/01/2020</div><div class="t" style="left:235px;top:264px">Stock - Expense</div><div class="t tick" style="left:341px;top:264px">CORCPB5</div><div class="t" style="left:447px;top:264px">FITID20200103001</div><div class="t r" style="left:549px;width:100px;top:264px">-1.1255</div><div class="t r" style="left:655px;width:99px;top:264px">42.0711</div><div class="t r" style="left:760px;width:100px;top:264px">0.00</div><div class="t r" style="left:866px;width:99px;top:264px">47.35</div><div class="t" style="left:974px;top:264px">Annual administration fee - -1.1255 units @ 4,207.11</div><div class="na" style="left:1375px;width:136px;top:264px">N/A</div><div class="t r" style="left:1512px;width:77px;top:264px"><span class="cash">CASH</span></div><div class="dd" style="left:1595px;top:265px"></div><div class="t r" style="left:1614px;width:77px;top:264px"><span class="cash">CASH</span></div><div class="dd" style="left:1697px;top:265px"></div><div class="cb" style="top:290px"></div><div class="t" style="left:24px;top:286px">04/02/2020</div><div class="t" style="left:130px;top:286px">04/02/2020</div><div class="t" style="left:235px;top:286px">Stock - Expense</div><div class="t tick" style="left:341px;top:286px">CORCPB5</div><div class="t" style="left:447px;top:286px">FITID20200204001</div><div class="t r" style="left:549px;width:100px;top:286px">-1.1296</div><div class="t r" style="left:655px;width:99px;top:286px">41.9001</div><div class="t r" style="left:760px;width:100px;top:286px">0.00</div><div class="t r" style="left:866px;width:99px;top:286px">47.33</div><div class="t" style="left:974px;top:286px">Annual administration fee - -1.1296 units @ 4,190.01</div><div class="na" style="left:1375px;width:136px;top:286px">N/A</div><div class="t r" style="left:1512px;width:77px;top:286px"><span class="cash">CASH</span></div><div class="dd" style="left:1595px;top:287px"></div><div class="t r" style="left:1614px;width:77px;top:286px"><span class="cash">CASH</span></div><div class="dd" style="left:1697px;top:287px"></div><div class="cb" style="top:312px"></div><div class="t" style="left:24px;top:308px">12/02/2020</div><div class="t" style="left:130px;top:308px">12/02/2020</div><div class="t" style="left:235px;top:308px">Stock - Sell</div><div class="t tick" style="left:341px;top:308px">CORCPB5</div><div class="t" style="left:447px;top:308px">FITID20200212001</div><div class="t r" style="left:549px;width:100px;top:308px">-0.2096</div><div class="t r" style="left:655px;width:99px;top:308px">42.1934</div><div class="t r" style="left:760px;width:100px;top:308px">0.00</div><div class="t r" style="left:866px;width:99px;top:308px">8.84</div><div class="t" style="left:974px;top:308px">Switch out - -0.2096 units @ 4,219.34</div><div class="t tick" style="left:1378px;top:308px">SELL</div><div class="dd" style="left:1493px;top:309px"></div><div class="t r" style="left:1512px;width:77px;top:308px"><span class="cash">CASH</span></div><div class="dd" style="left:1595px;top:309px"></div><div class="t r" style="left:1614px;width:77px;top:308px"><span class="cash">CASH</span></div><div class="dd" style="left:1697px;top:309px"></div><div class="cb" style="top:334px"></div><div class="t" style="left:24px;top:330px">12/02/2020</div><div class="t" style="left:130px;top:330px">12/02/2020</div><div class="t" style="left:235px;top:330px">Stock - Sell</div><div class="t tick" style="left:341px;top:330px">CORCPB5</div><div class="t" style="left:447px;top:330px">FITID20200212002</div><div class="t r" style="left:549px;width:100px;top:330px">-255.4545</div><div class="t r" style="left:655px;width:99px;top:330px">42.1934</div><div class="t r" style="left:760px;width:100px;top:330px">0.00</div><div class="t r" style="left:866px;width:99px;top:330px">10,778.49</div><div class="t" style="left:974px;top:330px">Switch out - -255.4545 units @ 4,219.34</div><div class="t tick" style="left:1378px;top:330px">SELL</div><div class="dd" style="left:1493px;top:331px"></div><div class="t r" style="left:1512px;width:77px;top:330px"><span class="cash">CASH</span></div><div class="dd" style="left:1595px;top:331px"></div><div class="t r" style="left:1614px;width:77px;top:330px"><span class="cash">CASH</span></div><div class="dd" style="left:1697px;top:331px"></div><div class="cb" style="top:356px"></div><div class="t" style="left:24px;top:352px">04/03/2020</div><div class="t" style="left:130px;top:352px">04/03/2020</div><div class="t" style="left:235px;top:352px">Stock - Expense</div><div class="t tick" style="left:341px;top:352px">CORCPB5</div><div class="t" style="left:447px;top:352px">FITID20200304001</div><div class="t r" style="left:549px;width:100px;top:352px">-1.0267</div><div class="t r" style="left:655px;width:99px;top:352px">40.6156</div><div class="t r" style="left:760px;width:100px;top:352px">0.00</div><div class="t r" style="left:866px;width:99px;top:352px">41.70</div><div class="t" style="left:974px;top:352px">Annual administration fee - -1.0267 units @ 4,061.56</div><div class="na" style="left:1375px;width:136px;top:352px">N/A</div><div class="t r" style="left:1512px;width:77px;top:352px"><span class="cash">CASH</span></div><div class="dd" style="left:1595px;top:353px"></div><div class="t r" style="left:1614px;width:77px;top:352px"><span class="cash">CASH</span></div><div class="dd" style="left:1697px;top:353px"></div><div class="cb" style="top:378px"></div><div class="t" style="left:24px;top:374px">01/04/2020</div><div class="t" style="left:130px;top:374px">01/04/2020</div><div class="t" style="left:235px;top:374px">Stock - Re Invest</div><div class="t tick" style="left:341px;top:374px">CORCPB5</div><div class="t" style="left:447px;top:374px">FITID20200401001</div><div class="t r" style="left:549px;width:100px;top:374px">22.7656</div><div class="t r" style="left:655px;width:99px;top:374px">36.1844</div><div class="t r" style="left:760px;width:100px;top:374px">0.00</div><div class="t r" style="left:866px;width:99px;top:374px">823.76</div><div class="t" style="left:974px;top:374px">Reinvestment - 22.7656 units @ 3,618.44</div><div class="t tick" style="left:1378px;top:374px">DIV</div><div class="dd" style="left:1493px;top:375px"></div><div class="t r" style="left:1512px;width:77px;top:374px"><span class="cash">CASH</span></div><div class="dd" style="left:1595px;top:375px"></div><div class="na" style="left:1614px;width:101px;top:374px">N/A</div><div class="cb" style="top:400px"></div><div class="t" style="left:24px;top:396px">02/04/2020</div><div class="t" style="left:130px;top:396px">02/04/2020</div><div class="t" style="left:235px;top:396px">Stock - Expense</div><div class="t tick" style="left:341px;top:396px">CORCPB5</div><div class="t" style="left:447px;top:396px">FITID20200402001</div><div class="t r" style="left:549px;width:100px;top:396px">-1.1304</div><div class="t r" style="left:655px;width:99px;top:396px">36.4729</div><div class="t r" style="left:760px;width:100px;top:396px">0.00</div><div class="t r" style="left:866px;width:99px;top:396px">41.23</div><div class="t" style="left:974px;top:396px">Annual administration fee - -1.1304 units @ 3,647.29</div><div class="na" style="left:1375px;width:136px;top:396px">N/A</div><div class="t r" style="left:1512px;width:77px;top:396px"><span class="cash">CASH</span></div><div class="dd" style="left:1595px;top:397px"></div><div class="t r" style="left:1614px;width:77px;top:396px"><span class="cash">CASH</span></div><div class="dd" style="left:1697px;top:397px"></div><div class="cb" style="top:422px"></div><div class="t" style="left:24px;top:418px">03/05/2019</div><div class="t" style="left:130px;top:418px">03/05/2019</div><div class="t" style="left:235px;top:418px">Stock - Expense</div><div class="t tick" style="left:341px;top:418px">PRUENHD</div><div class="t" style="left:447px;top:418px">FITID20190503002</div><div class="t r" style="left:549px;width:100px;top:418px">-26.1414</div><div class="t r" style="left:655px;width:99px;top:418px">2.2669</div><div class="t r" style="left:760px;width:100px;top:418px">0.00</div><div class="t r" style="left:866px;width:99px;top:418px">59.26</div><div class="t" style="left:974px;top:418px">Annual administration fee - -26.1414 units @ 226.69</div><div class="na" style="left:1375px;width:136px;top:418px">N/A</div><div class="t r" style="left:1512px;width:77px;top:418px"><span class="cash">CASH</span></div><div class="dd" style="left:1595px;top:419px"></div><div class="t r" style="left:1614px;width:77px;top:418px"><span class="cash">CASH</span></div><div class="dd" style="left:1697px;top:419px"></div><div class="cb" style="top:444px"></div><div class="t" style="left:24px;top:440px">04/06/2019</div><div class="t" style="left:130px;top:440px">04/06/2019</div><div class="t" style="left:235px;top:440px">Stock - Expense</div><div class="t tick" style="left:341px;top:440px">PRUENHD</div><div class="t" style="left:447px;top:440px">FITID20190604002</div><div class="t r" style="left:549px;width:100px;top:440px">-27.8071</div><div class="t r" style="left:655px;width:99px;top:440px">2.2167</div><div class="t r" style="left:760px;width:100px;top:440px">0.00</div><div class="t r" style="left:866px;width:99px;top:440px">61.64</div><div class="t" style="left:974px;top:440px">Annual administration fee - -27.8071 units @ 221.67</div><div class="na" style="left:1375px;width:136px;top:440px">N/A</div><div class="t r" style="left:1512px;width:77px;top:440px"><span class="cash">CASH</span></div><div class="dd" style="left:1595px;top:441px"></div><div class="t r" style="left:1614px;width:77px;top:440px"><span class="cash">CASH</span></div><div class="dd" style="left:1697px;top:441px"></div><div class="cb" style="top:466px"></div><div class="t" style="left:24px;top:462px">01/07/2019</div><div class="t" style="left:130px;top:462px">01/07/2019</div><div class="t" style="left:235px;top:462px">Stock - Re Invest</div><div class="t tick" style="left:341px;top:462px">PRUENHD</div><div class="t" style="left:447px;top:462px">FITID20190701002</div><div class="t r" style="left:549px;width:100px;top:462px">1662.0726</div><div class="t r" style="left:655px;width:99px;top:462px">2.2021</div><div class="t r" style="left:760px;width:100px;top:462px">0.00</div><div class="t r" style="left:866px;width:99px;top:462px">3,660.05</div><div class="t" style="left:974px;top:462px">Reinvestment - 1,662.0726 units @ 220.21</div><div class="t tick" style="left:1378px;top:462px">DIV</div><div class="dd" style="left:1493px;top:463px"></div><div class="t r" style="left:1512px;width:77px;top:462px"><span class="cash">CASH</span></div><div class="dd" style="left:1595px;top:463px"></div><div class="na" style="left:1614px;width:101px;top:462px">N/A</div><div class="cb" style="top:488px"></div><div class="t" style="left:24px;top:484px">03/07/2019</div><div class="t" style="left:130px;top:484px">03/07/2019</div><div class="t" style="left:235px;top:484px">Stock - Expense</div><div class="t tick" style="left:341px;top:484px">PRUENHD</div><div class="t" style="left:447px;top:484px">FITID20190703002</div><div class="t r" style="left:549px;width:100px;top:484px">-27.651</div><div class="t r" style="left:655px;width:99px;top:484px">2.1822</div><div class="t r" style="left:760px;width:100px;top:484px">0.00</div><div class="t r" style="left:866px;width:99px;top:484px">60.34</div><div class="t" style="left:974px;top:484px">Annual administration fee - -27.6510 units @ 218.22</div><div class="na" style="left:1375px;width:136px;top:484px">N/A</div><div class="t r" style="left:1512px;width:77px;top:484px"><span class="cash">CASH</span></div><div class="dd" style="left:1595px;top:485px"></div><div class="t r" style="left:1614px;width:77px;top:484px"><span class="cash">CASH</span></div><div class="dd" style="left:1697px;top:485px"></div><div class="cb" style="top:510px"></div><div class="t" style="left:24px;top:506px">02/08/2019</div><div class="t" style="left:130px;top:506px">02/08/2019</div><div class="t" style="left:235px;top:506px">Stock - Expense</div><div class="t tick" style="left:341px;top:506px">PRUENHD</div><div class="t" style="left:447px;top:506px">FITID20190802002</div><div class="t r" style="left:549px;width:100px;top:506px">-29.3032</div><div class="t r" style="left:655px;width:99px;top:506px">2.167</div><div class="t r" style="left:760px;width:100px;top:506px">0.00</div><div class="t r" style="left:866px;width:99px;top:506px">63.50</div><div class="t" style="left:974px;top:506px">Annual administration fee - -29.3032 units @ 216.7</div><div class="na" style="left:1375px;width:136px;top:506px">N/A</div><div class="t r" style="left:1512px;width:77px;top:506px"><span class="cash">CASH</span></div><div class="dd" style="left:1595px;top:507px"></div><div class="t r" style="left:1614px;width:77px;top:506px"><span class="cash">CASH</span></div><div class="dd" style="left:1697px;top:507px"></div><div class="cb" style="top:532px"></div><div class="t" style="left:24px;top:528px">04/09/2019</div><div class="t" style="left:130px;top:528px">04/09/2019</div><div class="t" style="left:235px;top:528px">Stock - Expense</div><div class="t tick" style="left:341px;top:528px">PRUENHD</div><div class="t" style="left:447px;top:528px">FITID20190904002</div><div class="t r" style="left:549px;width:100px;top:528px">-29.2968</div><div class="t r" style="left:655px;width:99px;top:528px">2.0934</div><div class="t r" style="left:760px;width:100px;top:528px">0.00</div><div class="t r" style="left:866px;width:99px;top:528px">61.33</div><div class="t" style="left:974px;top:528px">Annual administration fee - -29.2968 units @ 209.34</div><div class="na" style="left:1375px;width:136px;top:528px">N/A</div><div class="t r" style="left:1512px;width:77px;top:528px"><span class="cash">CASH</span></div><div class="dd" style="left:1595px;top:529px"></div><div class="t r" style="left:1614px;width:77px;top:528px"><span class="cash">CASH</span></div><div class="dd" style="left:1697px;top:529px"></div><div class="cb" style="top:554px"></div><div class="t" style="left:24px;top:550px">01/10/2019</div><div class="t" style="left:130px;top:550px">01/10/2019</div><div class="t" style="left:235px;top:550px">Stock - Re Invest</div><div class="t tick" style="left:341px;top:550px">PRUENHD</div><div class="t" style="left:447px;top:550px">FITID20191001002</div><div class="t r" style="left:549px;width:100px;top:550px">392.8011</div><div class="t r" style="left:655px;width:99px;top:550px">2.0906</div><div class="t r" style="left:760px;width:100px;top:550px">0.00</div><div class="t r" style="left:866px;width:99px;top:550px">821.19</div><div class="t" style="left:974px;top:550px">Reinvestment - 392.8011 units @ 209.06</div><div class="t tick" style="left:1378px;top:550px">DIV</div><div class="dd" style="left:1493px;top:551px"></div><div class="t r" style="left:1512px;width:77px;top:550px"><span class="cash">CASH</span></div><div class="dd" style="left:1595px;top:551px"></div><div class="na" style="left:1614px;width:101px;top:550px">N/A</div><div class="cb" style="top:576px"></div><div class="t" style="left:24px;top:572px">02/10/2019</div><div class="t" style="left:130px;top:572px">02/10/2019</div><div class="t" style="left:235px;top:572px">Stock - Expense</div><div class="t tick" style="left:341px;top:572px">PRUENHD</div><div class="t" style="left:447px;top:572px">FITID20191002002</div><div class="t r" style="left:549px;width:100px;top:572px">-27.8049</div><div class="t r" style="left:655px;width:99px;top:572px">2.1061</div><div class="t r" style="left:760px;width:100px;top:572px">0.00</div><div class="t r" style="left:866px;width:99px;top:572px">58.56</div><div class="t" style="left:974px;top:572px">Annual administration fee - -27.8049 units @ 210.61</div><div class="na" style="left:1375px;width:136px;top:572px">N/A</div><div class="t r" style="left:1512px;width:77px;top:572px"><span class="cash">CASH</span></div><div class="dd" style="left:1595px;top:573px"></div><div class="t r" style="left:1614px;width:77px;top:572px"><span class="cash">CASH</span></div><div class="dd" style="left:1697px;top:573px"></div><div class="cb" style="top:598px"></div><div class="t" style="left:24px;top:594px">04/11/2019</div><div class="t" style="left:130px;top:594px">04/11/2019</div><div class="t" style="left:235px;top:594px">Stock - Expense</div><div class="t tick" style="left:341px;top:594px">PRUENHD</div><div class="t" style="left:447px;top:594px">FITID20191104002</div><div class="t r" style="left:549px;width:100px;top:594px">-28.463</div><div class="t r" style="left:655px;width:99px;top:594px">2.147</div><div class="t r" style="left:760px;width:100px;top:594px">0.00</div><div class="t r" style="left:866px;width:99px;top:594px">61.11</div><div class="t" style="left:974px;top:594px">Annual administration fee - -28.4630 units @ 214.7</div><div class="na" style="left:1375px;width:136px;top:594px">N/A</div><div class="t r" style="left:1512px;width:77px;top:594px"><span class="cash">CASH</span></div><div class="dd" style="left:1595px;top:595px"></div><div class="t r" style="left:1614px;width:77px;top:594px"><span class="cash">CASH</span></div><div class="dd" style="left:1697px;top:595px"></div><div class="cb" style="top:620px"></div><div class="t" style="left:24px;top:616px">04/12/2019</div><div class="t" style="left:130px;top:616px">04/12/2019</div><div class="t" style="left:235px;top:616px">Stock - Expense</div><div class="t tick" style="left:341px;top:616px">PRUENHD</div><div class="t" style="left:447px;top:616px">FITID20191204002</div><div class="t r" style="left:549px;width:100px;top:616px">-27.4808</div><div class="t r" style="left:655px;width:99px;top:616px">2.1455</div><div class="t r" style="left:760px;width:100px;top:616px">0.00</div><div class="t r" style="left:866px;width:99px;top:616px">58.96</div><div class="t" style="left:974px;top:616px">Annual administration fee - -27.4808 units @ 214.55</div><div class="na" style="left:1375px;width:136px;top:616px">N/A</div><div class="t r" style="left:1512px;width:77px;top:616px"><span class="cash">CASH</span></div><div class="dd" style="left:1595px;top:617px"></div><div class="t r" style="left:1614px;width:77px;top:616px"><span class="cash">CASH</span></div><div class="dd" style="left:1697px;top:617px"></div><div class="cb" style="top:642px"></div><div class="t" style="left:24px;top:638px">02/01/2020</div><div class="t" style="left:130px;top:638px">02/01/2020</div><div class="t" style="left:235px;top:638px">Stock - Re Invest</div><div class="t tick" style="left:341px;top:638px">PRUENHD</div><div class="t" style="left:447px;top:638px">FITID20200102002</div><div class="t r" style="left:549px;width:100px;top:638px">2161.1011</div><div class="t r" style="left:655px;width:99px;top:638px">2.0561</div><div class="t r" style="left:760px;width:100px;top:638px">0.00</div><div class="t r" style="left:866px;width:99px;top:638px">4,443.44</div><div class="t" style="left:974px;top:638px">Reinvestment - 2,161.1011 units @ 205.61</div><div class="t tick" style="left:1378px;top:638px">DIV</div><div class="dd" style="left:1493px;top:639px"></div><div class="t r" style="left:1512px;width:77px;top:638px"><span class="cash">CASH</span></div><div class="dd" style="left:1595px;top:639px"></div><div class="na" style="left:1614px;width:101px;top:638px">N/A</div><div class="cb" style="top:664px"></div><div class="t" style="left:24px;top:660px">03/01/2020</div><div class="t" style="left:130px;top:660px">03/01/2020</div><div class="t" style="left:235px;top:660px">Stock - Expense</div><div class="t tick" style="left:341px;top:660px">PRUENHD</div><div class="t" style="left:447px;top:660px">FITID20200103002</div><div class="t r" style="left:549px;width:100px;top:660px">-29.4956</div><div class="t r" style="left:655px;width:99px;top:660px">2.0359</div><div class="t r" style="left:760px;width:100px;top:660px">0.00</div><div class="t r" style="left:866px;width:99px;top:660px">60.05</div><div class="t" style="left:974px;top:660px">Annual administration fee - -29.4956 units @ 203.59</div><div class="na" style="left:1375px;width:136px;top:660px">N/A</div><div class="t r" style="left:1512px;width:77px;top:660px"><span class="cash">CASH</span></div><div class="dd" style="left:1595px;top:661px"></div><div class="t r" style="left:1614px;width:77px;top:660px"><span class="cash">CASH</span></div><div class="dd" style="left:1697px;top:661px"></div><div class="cb" style="top:686px"></div><div class="t" style="left:24px;top:682px">04/02/2020</div><div class="t" style="left:130px;top:682px">04/02/2020</div><div class="t" style="left:235px;top:682px">Stock - Expense</div><div class="t tick" style="left:341px;top:682px">PRUENHD</div><div class="t" style="left:447px;top:682px">FITID20200204002</div><div class="t r" style="left:549px;width:100px;top:682px">-29.8086</div><div class="t r" style="left:655px;width:99px;top:682px">1.9491</div><div class="t r" style="left:760px;width:100px;top:682px">0.00</div><div class="t r" style="left:866px;width:99px;top:682px">58.10</div><div class="t" style="left:974px;top:682px">Annual administration fee - -29.8086 units @ 194.91</div><div class="na" style="left:1375px;width:136px;top:682px">N/A</div><div class="t r" style="left:1512px;width:77px;top:682px"><span class="cash">CASH</span></div><div class="dd" style="left:1595px;top:683px"></div><div class="t r" style="left:1614px;width:77px;top:682px"><span class="cash">CASH</span></div><div class="dd" style="left:1697px;top:683px"></div><div class="cb" style="top:708px"></div><div class="t" style="left:24px;top:704px">14/02/2020</div><div class="t" style="left:130px;top:704px">14/02/2020</div><div class="t" style="left:235px;top:704px">Stock - Buy</div><div class="t tick" style="left:341px;top:704px">PRUENHD</div><div class="t" style="left:447px;top:704px">FITID20200214001</div><div class="t r" style="left:549px;width:100px;top:704px">4.7135</div><div class="t r" style="left:655px;width:99px;top:704px">1.8776</div><div class="t r" style="left:760px;width:100px;top:704px">0.00</div><div class="t r" style="left:866px;width:99px;top:704px">8.85</div><div class="t" style="left:974px;top:704px">Switch in - 4.7135 units @ 187.76</div><div class="t tick" style="left:1378px;top:704px">BUY</div><div class="dd" style="left:1493px;top:705px"></div><div class="t r" style="left:1512px;width:77px;top:704px"><span class="cash">CASH</span></div><div class="dd" style="left:1595px;top:705px"></div><div class="t r" style="left:1614px;width:77px;top:704px"><span class="cash">CASH</span></div><div class="dd" style="left:1697px;top:705px"></div><div class="cb" style="top:730px"></div><div class="t" style="left:24px;top:726px">04/03/2020</div><div class="t" style="left:130px;top:726px">04/03/2020</div><div class="t" style="left:235px;top:726px">Stock - Expense</div><div class="t tick" style="left:341px;top:726px">PRUENHD</div><div class="t" style="left:447px;top:726px">FITID20200304002</div><div class="t r" style="left:549px;width:100px;top:726px">-29.1686</div><div class="t r" style="left:655px;width:99px;top:726px">1.7368</div><div class="t r" style="left:760px;width:100px;top:726px">0.00</div><div class="t r" style="left:866px;width:99px;top:726px">50.66</div><div class="t" style="left:974px;top:726px">Annual administration fee - -29.1686 units @ 173.68</div><div class="na" style="left:1375px;width:136px;top:726px">N/A</div><div class="t r" style="left:1512px;width:77px;top:726px"><span class="cash">CASH</span></div><div class="dd" style="left:1595px;top:727px"></div><div class="t r" style="left:1614px;width:77px;top:726px"><span class="cash">CASH</span></div><div class="dd" style="left:1697px;top:727px"></div><div class="cb" style="top:752px"></div><div class="t" style="left:24px;top:748px">01/04/2020</div><div class="t" style="left:130px;top:748px">01/04/2020</div><div class="t" style="left:235px;top:748px">Stock - Re Invest</div><div class="t tick" style="left:341px;top:748px">PRUENHD</div><div class="t" style="left:447px;top:748px">FITID20200401002</div><div class="t r" style="left:549px;width:100px;top:748px">1642.1643</div><div class="t r" style="left:655px;width:99px;top:748px">1.0082</div><div class="t r" style="left:760px;width:100px;top:748px">0.00</div><div class="t r" style="left:866px;width:99px;top:748px">1,655.63</div><div class="t" style="left:974px;top:748px">Reinvestment - 1,642.1643 units @ 100.82</div><div class="t tick" style="left:1378px;top:748px">DIV</div><div class="dd" style="left:1493px;top:749px"></div><div class="t r" style="left:1512px;width:77px;top:748px"><span class="cash">CASH</span></div><div class="dd" style="left:1595px;top:749px"></div><div class="na" style="left:1614px;width:101px;top:748px">N/A</div>
<div id="vlines"><div class="vl" style="left:20px"></div><div class="vl" style="left:126px"></div><div class="vl" style="left:231px"></div><div class="vl" style="left:337px"></div><div class="vl" style="left:443px"></div><div class="vl" style="left:548px"></div><div class="vl" style="left:654px"></div><div class="vl" style="left:759px"></div><div class="vl" style="left:865px"></div><div class="vl" style="left:970px"></div><div class="vl" style="left:1374px"></div><div class="vl" style="left:1511px"></div><div class="vl" style="left:1613px"></div><div class="vl" style="left:1715px"></div></div>
<div id="sb"><svg style="position:absolute;left:4px;top:5px" width="9" height="6"><path d="M0.8 5.2L4.5 1.5L8.2 5.2" fill="none" stroke="#606060" stroke-width="2"/></svg><div id="thumb"></div><svg style="position:absolute;left:4px;top:751px" width="9" height="6"><path d="M0.8 0.8L4.5 4.5L8.2 0.8" fill="none" stroke="#606060" stroke-width="2"/></svg></div>
</div>
<div class="abs" style="left:1895px;top:251px;width:17px;height:1px;background:#F2F2F6"></div>
<div id="status">Ready ...</div>
</body></html>
